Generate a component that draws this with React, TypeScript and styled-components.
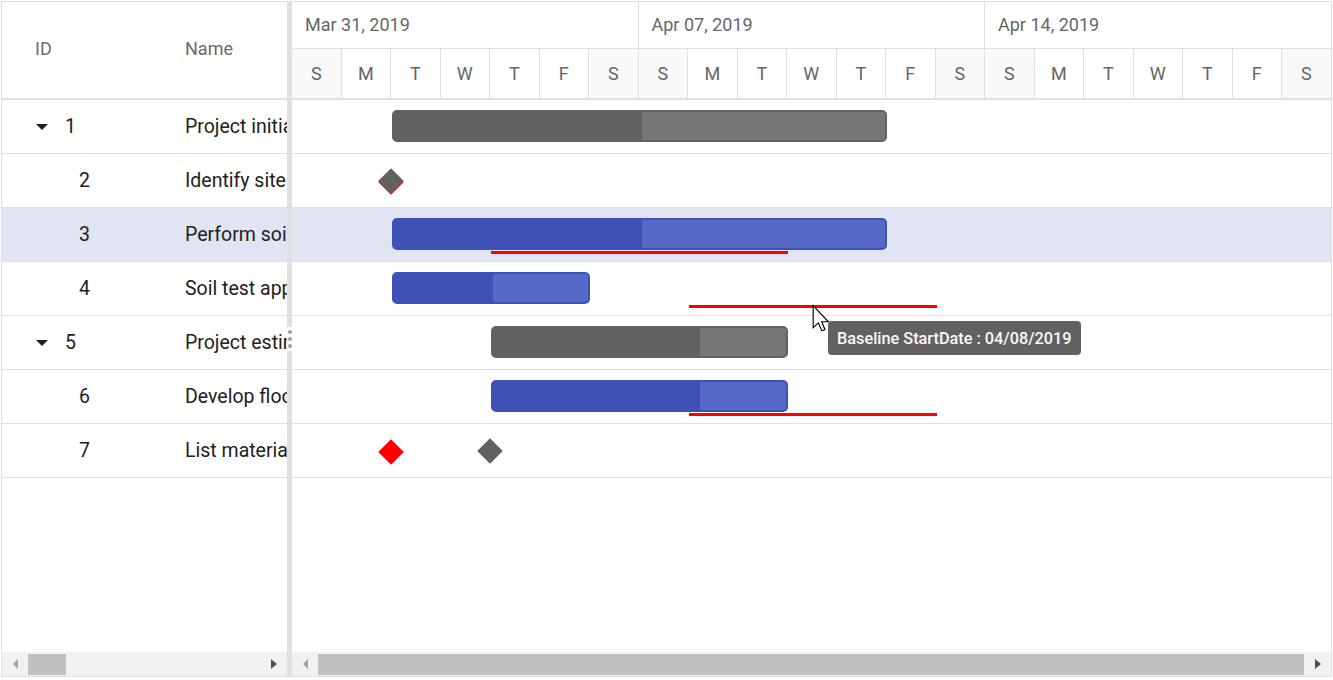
import React from "react";
import styled, { createGlobalStyle } from "styled-components";

const DAY = 49.5;

const GlobalStyle = createGlobalStyle`
  html, body { margin: 0; padding: 0; background: #fff; }
  body { font-family: Roboto, "Noto Sans", Arial, sans-serif; }
  * { box-sizing: border-box; }
`;

type Task = {
  id: number;
  name: string;
  level: number;
  parent?: boolean;
  milestone?: boolean;
  start: number;
  dur?: number;
  progress?: number;
  baseStart?: number;
  baseDur?: number;
  selected?: boolean;
};

const tasks: Task[] = [
  { id: 1, name: "Project initiation", level: 0, parent: true, start: 2, dur: 10, progress: 50 },
  { id: 2, name: "Identify site location", level: 1, milestone: true, start: 2, baseStart: 2 },
  { id: 3, name: "Perform soil test", level: 1, start: 2, dur: 10, progress: 50, baseStart: 4, baseDur: 6, selected: true },
  { id: 4, name: "Soil test approval", level: 1, start: 2, dur: 4, progress: 50, baseStart: 8, baseDur: 5 },
  { id: 5, name: "Project estimation", level: 0, parent: true, start: 4, dur: 6, progress: 70 },
  { id: 6, name: "Develop floor plan for estimation", level: 1, start: 4, dur: 6, progress: 70, baseStart: 8, baseDur: 5 },
  { id: 7, name: "List materials", level: 1, milestone: true, start: 4, baseStart: 2 },
];

const weeks = ["Mar 31, 2019", "Apr 07, 2019", "Apr 14, 2019"];
const dayLetters = ["S", "M", "T", "W", "T", "F", "S"];

const Root = styled.div`
  margin: 1px 0 0 1px;
  width: 1331px;
  height: 676px;
  border: 1px solid #e0e0e0;
  display: flex;
  overflow: hidden;
  background: #fff;
`;

const GridPane = styled.div`
  width: 285px;
  flex: none;
  display: flex;
  flex-direction: column;
  overflow: hidden;
`;

const ChartPane = styled.div`
  flex: 1;
  min-width: 0;
  display: flex;
  flex-direction: column;
  overflow: hidden;
`;

const Splitter = styled.div`
  width: 5px;
  flex: none;
  background: #e0e0e0;
  display: flex;
  flex-direction: column;
  justify-content: center;
  align-items: center;
`;

const SplitHandle = styled.div`
  width: 5px;
  height: 24px;
  background: #fff;
  display: flex;
  flex-direction: column;
  align-items: center;
  justify-content: center;
  gap: 3px;
`;

const Dot = styled.span`
  width: 4px;
  height: 4px;
  border-radius: 50%;
  background: #9e9e9e;
`;

const GridHeader = styled.div`
  height: 98px;
  flex: none;
  border-bottom: 2px solid #e0e0e0;
  padding-bottom: 4px;
  display: flex;
  align-items: center;
`;

const HeaderCell = styled.div<{ $w?: number }>`
  ${(p) => (p.$w ? `width: ${p.$w}px; flex: none;` : "flex: 1;")}
  padding-left: 33px;
  font-size: 18px;
  font-weight: 400;
  color: #6b6b6b;
  white-space: nowrap;
  overflow: hidden;
`;

const Body = styled.div`
  flex: 1;
  min-height: 0;
  position: relative;
  overflow: hidden;
`;

const GridRow = styled.div<{ $selected?: boolean }>`
  height: 54px;
  border-bottom: 1px solid #e0e0e0;
  display: flex;
  align-items: center;
  background: ${(p) => (p.$selected ? "#e1e4f2" : "#fff")};
`;

const IdCell = styled.div<{ $indent: number }>`
  width: 150px;
  flex: none;
  display: flex;
  align-items: center;
  padding-left: ${(p) => p.$indent}px;
  font-size: 19.5px;
  color: #212121;
`;

const ExpandIcon = styled.span`
  width: 30px;
  flex: none;
  display: flex;
  align-items: center;
  &::before {
    content: "";
    margin-left: 1px;
    border-left: 6px solid transparent;
    border-right: 6px solid transparent;
    border-top: 6px solid #212121;
  }
`;

const NameCell = styled.div`
  flex: 1;
  min-width: 0;
  padding-left: 33px;
  font-size: 19.5px;
  color: #212121;
  white-space: nowrap;
  overflow: hidden;
`;

const TimelineHeader = styled.div`
  height: 98px;
  flex: none;
  border-bottom: 2px solid #e0e0e0;
  display: flex;
  flex-direction: column;
`;

const WeekTier = styled.div`
  height: 47px;
  flex: none;
  display: flex;
  border-bottom: 1px solid #e0e0e0;
`;

const WeekCell = styled.div`
  width: ${DAY * 7}px;
  flex: none;
  border-right: 1px solid #e0e0e0;
  padding-left: 13px;
  padding-bottom: 1px;
  display: flex;
  align-items: center;
  font-size: 18px;
  color: #666;
  white-space: nowrap;
`;

const DayTier = styled.div`
  flex: 1;
  display: flex;
`;

const DayCell = styled.div<{ $weekend: boolean }>`
  width: ${DAY}px;
  flex: none;
  border-right: 1px solid #e0e0e0;
  padding-bottom: 1px;
  display: flex;
  align-items: center;
  justify-content: center;
  font-size: 18px;
  color: #666;
  background: ${(p) => (p.$weekend ? "#f9f9f9" : "#fff")};
`;

const ChartRow = styled.div<{ $selected?: boolean }>`
  height: 54px;
  border-bottom: 1px solid #e0e0e0;
  position: relative;
  background: ${(p) => (p.$selected ? "#e1e4f2" : "#fff")};
`;

const Bar = styled.div<{ $parent?: boolean }>`
  position: absolute;
  top: 10px;
  height: 32px;
  border-radius: 5px;
  overflow: hidden;
  border: 2px solid ${(p) => (p.$parent ? "#616161" : "#3f51b5")};
  background: ${(p) => (p.$parent ? "#767676" : "#5769c6")};
`;

const Progress = styled.div<{ $parent?: boolean }>`
  position: absolute;
  left: -2px;
  top: -2px;
  bottom: -2px;
  background: ${(p) => (p.$parent ? "#616161" : "#3f51b5")};
`;

const Baseline = styled.div`
  position: absolute;
  top: 43px;
  height: 3px;
  background: #ff0000;
`;

const Diamond = styled.div<{ $base?: boolean }>`
  position: absolute;
  width: 18px;
  height: 18px;
  margin-left: -9px;
  top: ${(p) => (p.$base ? 18.5 : 17.5)}px;
  transform: rotate(45deg);
  background: ${(p) => (p.$base ? "#ff0000" : "#616161")};
`;

const Tooltip = styled.div`
  position: absolute;
  left: 536px;
  top: 221px;
  height: 34px;
  padding: 0 9px;
  border-radius: 4px;
  background: #616161;
  color: #fafafa;
  font-size: 16.3px;
  font-weight: 500;
  display: flex;
  align-items: center;
  white-space: nowrap;
`;

const Cursor = styled.svg`
  position: absolute;
  left: 520px;
  top: 205px;
  overflow: visible;
`;

const Scrollbar = styled.div`
  height: 24px;
  flex: none;
  background: #f1f1f1;
  display: flex;
  align-items: center;
`;

const ArrowBtn = styled.div<{ $dir: "left" | "right"; $w: number; $active?: boolean }>`
  width: ${(p) => p.$w}px;
  flex: none;
  height: 100%;
  display: flex;
  align-items: center;
  justify-content: center;
  &::before {
    content: "";
    border-top: 5px solid transparent;
    border-bottom: 5px solid transparent;
    ${(p) =>
      p.$dir === "left"
        ? `border-right: 5px solid ${p.$active ? "#505050" : "#a3a3a3"};`
        : `border-left: 6px solid ${p.$active ? "#505050" : "#a3a3a3"};`}
  }
`;

const Track = styled.div`
  flex: 1;
  height: 100%;
  display: flex;
  align-items: center;
`;

const Thumb = styled.div<{ $w: number; $grow?: boolean }>`
  height: 21px;
  background: #c1c1c1;
  ${(p) => (p.$grow ? "flex: 1;" : `width: ${p.$w}px; flex: none;`)}
`;

function GridSide() {
  return (
    <GridPane>
      <GridHeader>
        <HeaderCell $w={150}>ID</HeaderCell>
        <HeaderCell>Name</HeaderCell>
      </GridHeader>
      <Body>
        {tasks.map((t) => (
          <GridRow key={t.id} $selected={t.selected}>
            <IdCell $indent={t.level === 0 ? 33 : 77}>
              {t.parent && <ExpandIcon />}
              {t.id}
            </IdCell>
            <NameCell>{t.name}</NameCell>
          </GridRow>
        ))}
      </Body>
      <Scrollbar>
        <ArrowBtn $dir="left" $w={26} />
        <Track>
          <Thumb $w={38} />
        </Track>
        <ArrowBtn $dir="right" $w={26} $active />
      </Scrollbar>
    </GridPane>
  );
}

function ChartSide() {
  const days = Array.from({ length: 21 }, (_, i) => i);
  return (
    <ChartPane>
      <TimelineHeader>
        <WeekTier>
          {weeks.map((w) => (
            <WeekCell key={w}>{w}</WeekCell>
          ))}
        </WeekTier>
        <DayTier>
          {days.map((d) => (
            <DayCell key={d} $weekend={d % 7 === 0 || d % 7 === 6}>
              {dayLetters[d % 7]}
            </DayCell>
          ))}
        </DayTier>
      </TimelineHeader>
      <Body>
        {tasks.map((t) => (
          <ChartRow key={t.id} $selected={t.selected}>
            {t.milestone ? (
              <>
                {t.baseStart !== undefined && <Diamond $base style={{ left: t.baseStart * DAY }} />}
                <Diamond style={{ left: t.start * DAY }} />
              </>
            ) : (
              <>
                <Bar $parent={t.parent} style={{ left: t.start * DAY + 1, width: (t.dur ?? 0) * DAY }}>
                  <Progress $parent={t.parent} style={{ width: `calc(${t.progress}% + 4px)` }} />
                </Bar>
                {t.baseStart !== undefined && (
                  <Baseline style={{ left: t.baseStart * DAY + 1, width: (t.baseDur ?? 0) * DAY }} />
                )}
              </>
            )}
          </ChartRow>
        ))}
        <Tooltip>Baseline StartDate : 04/08/2019</Tooltip>
        <Cursor width="18" height="27" viewBox="0 0 12 19">
          <path
            d="M0.5 0.5 L0.5 16 L4.2 12.6 L6.6 18.2 L8.8 17.2 L6.5 11.8 L11.2 11.8 Z"
            fill="#fff"
            stroke="#000"
            strokeWidth="0.8"
            strokeLinejoin="miter"
          />
        </Cursor>
      </Body>
      <Scrollbar>
        <ArrowBtn $dir="left" $w={26} />
        <Track>
          <Thumb $w={985} $grow />
        </Track>
        <ArrowBtn $dir="right" $w={27} $active />
      </Scrollbar>
    </ChartPane>
  );
}

export default function App() {
  return (
    <>
      <GlobalStyle />
      <Root>
        <GridSide />
        <Splitter>
          <SplitHandle>
            <Dot />
            <Dot />
            <Dot />
          </SplitHandle>
        </Splitter>
        <ChartSide />
      </Root>
    </>
  );
}
